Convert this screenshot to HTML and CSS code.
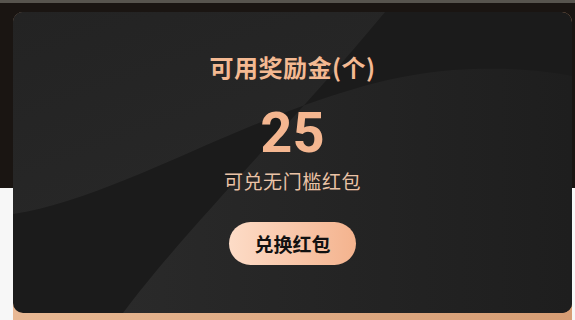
FILE: index.html
```html
<!DOCTYPE html>
<html lang="zh-CN">
<head>
<meta charset="utf-8">
<title>可用奖励金</title>
<link rel="stylesheet" href="styles.css">
</head>
<body>
<div class="page">
  <div class="stack">
    <section class="card">
      <svg class="card-bg" viewBox="0 0 559 301" preserveAspectRatio="none" aria-hidden="true">
        <defs>
          <clipPath id="leftOfDiag">
            <path d="M0,0 L372,0 C290,100 170,220 110,301 L0,301 Z"/>
          </clipPath>
          <clipPath id="rightOfDiag">
            <path d="M372,0 L559,0 L559,301 L110,301 C170,220 290,100 372,0 Z"/>
          </clipPath>
          <linearGradient id="gUL" x1="0" y1="0" x2="1" y2="1">
            <stop offset="0" stop-color="#232323"/>
            <stop offset="1" stop-color="#2a2a2a"/>
          </linearGradient>
          <linearGradient id="gBR" x1="0" y1="0" x2="1" y2="0">
            <stop offset="0" stop-color="#2d2d2d"/>
            <stop offset="1" stop-color="#1e1e1e"/>
          </linearGradient>
        </defs>
        <path clip-path="url(#leftOfDiag)" fill="url(#gUL)" d="M0,0 L559,0 L559,64 C540,60 500,54 440,58 C280,70 120,185 0,202 Z"/>
        <path clip-path="url(#rightOfDiag)" fill="url(#gBR)" d="M0,202 C120,185 280,70 440,58 C500,54 540,60 559,64 L559,301 L0,301 Z"/>
      </svg>
      <h1 class="title">可用奖励金(个)</h1>
      <div class="amount">25</div>
      <p class="desc">可兑无门槛红包</p>
      <button class="btn" type="button">兑换红包</button>
    </section>
  </div>
</div>
</body>
</html>
```

FILE: styles.css
```css
html, body {
  margin: 0;
  padding: 0;
}
body {
  background: #f7f7f7;
  font-family: "Noto Sans CJK SC", "Noto Sans", sans-serif;
}
.page {
  height: 320px;
  overflow: hidden;
  box-sizing: border-box;
  padding: 12px 3px 0 13px;
  background: linear-gradient(to bottom, #57544e 0, #57544e 3px, #1a1512 3px, #1a1512 188px, #f7f7f7 188px);
}
.stack {
  height: 330px;
  border-radius: 10px;
  background: linear-gradient(90deg, #e8b894, #d69d74);
}
.card {
  position: relative;
  height: 301px;
  box-sizing: border-box;
  border-radius: 10px;
  background: #1b1b1b;
  overflow: hidden;
  display: flex;
  flex-direction: column;
  align-items: center;
  padding-top: 39px;
}
.card-bg {
  position: absolute;
  left: 0;
  top: 0;
  width: 100%;
  height: 100%;
}
.title, .amount, .desc, .btn {
  position: relative;
}
.title {
  margin: 0;
  font-size: 24px;
  line-height: 32px;
  font-weight: 700;
  letter-spacing: 0.5px;
  color: #f4b992;
}
.amount {
  margin-top: 22px;
  font-family: Roboto, "Liberation Sans", sans-serif;
  font-weight: 700;
  font-size: 56px;
  line-height: 56px;
  color: #f4b690;
}
.desc {
  margin: 8px 0 0;
  font-size: 19px;
  line-height: 24px;
  letter-spacing: 0.6px;
  color: #ebc3a6;
}
.btn {
  margin-top: 29px;
  width: 127px;
  height: 43px;
  border: 0;
  border-radius: 22px;
  padding: 0;
  background: linear-gradient(90deg, #fddcc7, #f4b38e);
  font-family: "Noto Sans CJK SC", sans-serif;
  font-size: 19px;
  font-weight: 700;
  color: #111111;
}
```
